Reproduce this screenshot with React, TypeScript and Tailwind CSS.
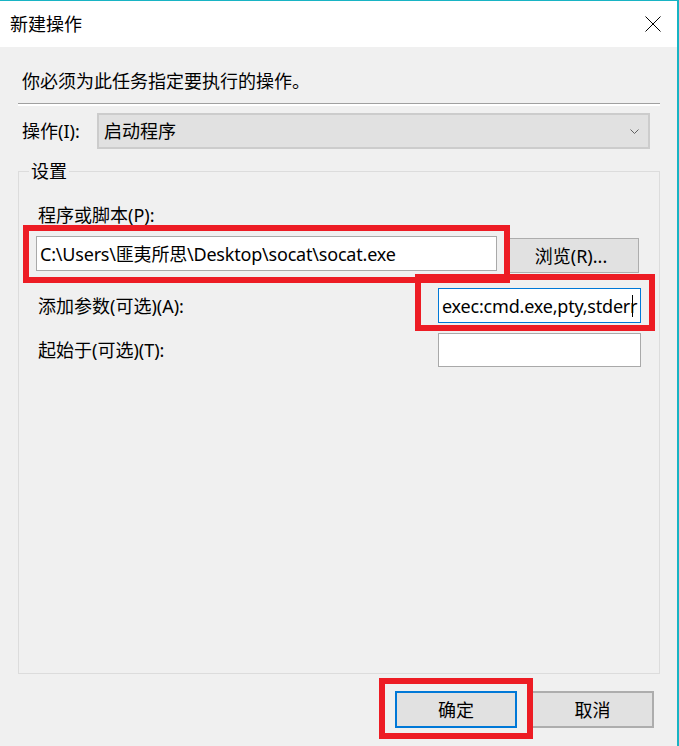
const FONT = "font-['Noto_Sans','Noto_Sans_CJK_SC',sans-serif]";

function CloseIcon() {
  return (
    <svg width="16" height="16" viewBox="0 0 16 16" className="text-black">
      <path d="M0.5 0.5 L15.5 15.5 M15.5 0.5 L0.5 15.5" stroke="currentColor" strokeWidth="1" fill="none" />
    </svg>
  );
}

function Chevron() {
  return (
    <svg width="9" height="5" viewBox="0 0 9 5" className="text-[#606060]">
      <path d="M0.5 0.5 L4.5 4.5 L8.5 0.5" stroke="currentColor" strokeWidth="1" fill="none" />
    </svg>
  );
}

function TitleBar() {
  return (
    <div className="flex h-[46px] items-center justify-between bg-white pl-[10px] pr-[16px]">
      <span className="text-[18px]">新建操作</span>
      <CloseIcon />
    </div>
  );
}

function TextBox({ value, focused = false, className = "" }: { value?: string; focused?: boolean; className?: string }) {
  return (
    <div
      className={`flex items-center overflow-hidden whitespace-nowrap bg-white pl-[3px] tracking-[-0.2px] ${
        focused ? "border border-[#0078d7]" : "border border-[#a9a9a9]"
      } ${className}`}
    >
      <span>{value}</span>
      {focused && <span className="ml-[-5px] h-[22px] w-px shrink-0 bg-black" />}
    </div>
  );
}

function Button({ label, primary = false, className = "" }: { label: string; primary?: boolean; className?: string }) {
  return (
    <div
      className={`flex items-center justify-center bg-[#e1e1e1] ${
        primary ? "border-2 border-[#0078d7]" : "border-2 border-[#adadad]"
      } ${className}`}
    >
      {label}
    </div>
  );
}

// red annotation rectangles drawn over the dialog
function Mark({ className }: { className: string }) {
  return <div className={`pointer-events-none absolute border-[6px] border-[#ed1c24] ${className}`} />;
}

export default function App() {
  return (
    <div
      className={`relative h-[746px] w-[679px] overflow-hidden border-t border-r-2 border-[#18b4c4] bg-[#f0f0f0] text-[18px] leading-[24px] text-black ${FONT}`}
    >
      <TitleBar />

      <div className="pl-[18px] pr-[17px]">
        <div className="mt-[22px] pl-[4px]">你必须为此任务指定要执行的操作。</div>

        <div className="mt-[10px] h-[3px] border-t border-[#a0a0a0] border-b-2 border-b-white" />

        <div className="mt-[7px] flex items-center pr-[10px]">
          <span className="w-[79px] pl-[4px]">操作(I):</span>
          <div className="flex h-[36px] flex-1 items-center justify-between border-2 border-[#cccccc] bg-[#e1e1e1] pl-[5px] pr-[9px]">
            <span>启动程序</span>
            <Chevron />
          </div>
        </div>

        <div className="relative mt-[22px] h-[503px] border border-[#dcdcdc] pl-[17px] pr-[18px] pt-[31px]">
          <span className="absolute left-[10px] top-[-13px] bg-[#f0f0f0] px-[2px]">设置</span>

          <div className="pl-[2px]">程序或脚本(P):</div>
          <div className="mt-[9px] flex items-start">
            <TextBox value="C:\Users\匪夷所思\Desktop\socat\socat.exe" className="h-[35px] w-[461px]" />
            <Button label="浏览(R)..." className="ml-[12px] mt-[2px] h-[35px] w-[130px] pr-[6px] !border !border-[#adadad]" />
          </div>

          <div className="mt-[15px] flex items-center justify-between">
            <span className="pl-[2px]">添加参数(可选)(A):</span>
            <TextBox value="exec:cmd.exe,pty,stderr" focused className="h-[35px] w-[203px]" />
          </div>

          <div className="mt-[10px] flex items-center justify-between">
            <span className="pl-[2px]">起始于(可选)(T):</span>
            <TextBox className="h-[34px] w-[203px]" />
          </div>
        </div>

        <div className="mt-[17px] flex justify-end gap-[14px] pr-[6px]">
          <Button label="确定" primary className="h-[37px] w-[122px]" />
          <Button label="取消" className="h-[37px] w-[123px]" />
        </div>
      </div>

      <Mark className="left-[23px] top-[224px] h-[58px] w-[487px]" />
      <Mark className="left-[415px] top-[273px] h-[57px] w-[240px]" />
      <Mark className="left-[379px] top-[677px] h-[61px] w-[154px]" />
    </div>
  );
}
